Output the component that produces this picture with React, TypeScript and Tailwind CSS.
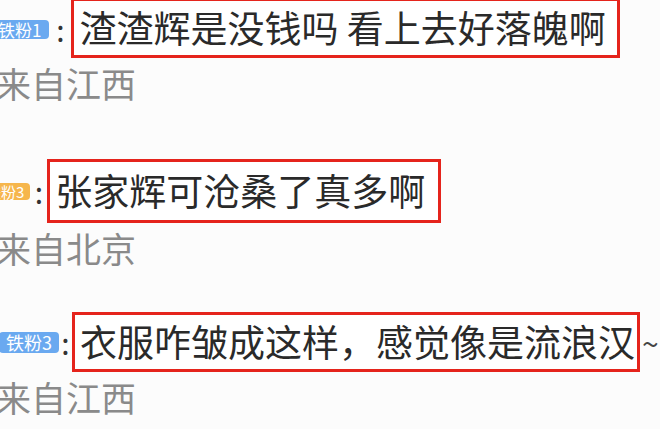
import React from 'react';

// One comment: fan badge, colon, highlighted text and the location line below it
interface Comment {
    id: number;
    badge: string;
    badgeClass: string;
    colonClass: string;
    boxClass: string;
    text: string;
    trailing?: string;
    location: string;
    blockClass: string;
}

const comments: Comment[] = [
    {
        id: 1,
        badge: '铁粉1',
        badgeClass: 'ml-[-10px] h-[19px] px-[8px] bg-[#6aa9f0] text-[17px]',
        colonClass: 'w-[22px]',
        boxClass: 'h-[60px] mt-[-2px] pr-[11px]',
        text: '渣渣辉是没钱吗 看上去好落魄啊',
        location: '来自江西',
        blockClass: 'mt-[0px]',
    },
    {
        id: 2,
        badge: '铁粉3',
        badgeClass: 'ml-[-20px] h-[17px] px-[6px] bg-[#f6b64c] text-[15px]',
        colonClass: 'w-[17px]',
        boxClass: 'h-[64px] pr-[13px]',
        text: '张家辉可沧桑了真多啊',
        location: '来自北京',
        blockClass: 'mt-[54px]',
    },
    {
        id: 3,
        badge: '铁粉3',
        badgeClass: 'ml-[-1px] h-[21px] px-[7px] bg-[#6aa9f0] text-[18px]',
        colonClass: 'w-[13px]',
        boxClass: 'h-[60px] pr-[2px]',
        text: '衣服咋皱成这样，感觉像是流浪汉',
        trailing: '~',
        location: '来自江西',
        blockClass: 'mt-[42px]',
    },
];

function CommentRow({ c }: { c: Comment }) {
    return (
        <div className={c.blockClass}>
            <div className="flex items-center whitespace-nowrap">
                <span
                    className={`${c.badgeClass} flex shrink-0 items-center rounded-[4px] leading-none text-white`}
                >
                    {c.badge}
                </span>
                <span className={`${c.colonClass} shrink-0 text-center text-[30px] leading-none text-[#333]`}>:</span>
                <div
                    className={`${c.boxClass} flex shrink-0 items-center border-[3px] border-[#e5241c] bg-white pl-[5px] text-[37px] text-[#2a2a2a]`}
                >
                    {c.text}
                </div>
                {c.trailing && (
                    <span className="ml-[2px] text-[30px] leading-none text-[#444]">{c.trailing}</span>
                )}
            </div>
            <p className="ml-[-4px] mt-[3px] whitespace-nowrap text-[35px] leading-[44px] text-[#8a8a8a]">
                {c.location}
            </p>
        </div>
    );
}

export default function App() {
    return (
        <main
            className="h-[429px] w-[660px] overflow-hidden bg-[#fcfcfc]"
            style={{ fontFamily: '"Noto Sans CJK SC", "Noto Sans", sans-serif' }}
        >
            {comments.map((c) => (
                <CommentRow key={c.id} c={c} />
            ))}
        </main>
    );
}
